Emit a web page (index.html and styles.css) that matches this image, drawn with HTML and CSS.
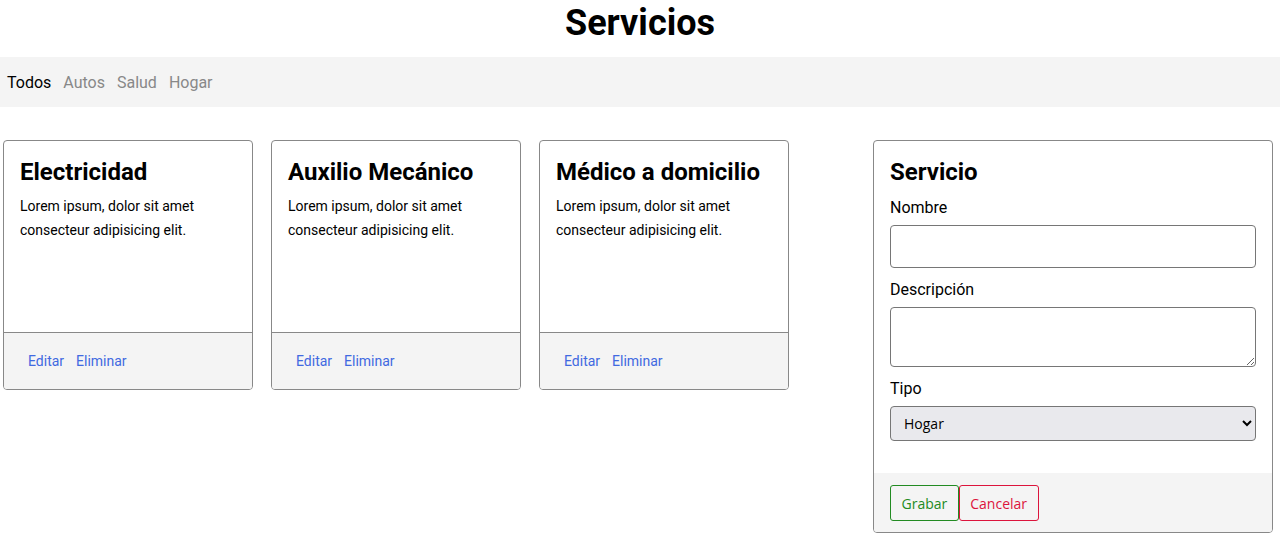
FILE: index.html
```html
<!DOCTYPE html>
<html lang="es">
<head>
  <meta charset="utf-8">
  <title>Servicios</title>
  <link rel="stylesheet" href="styles.css">
</head>
<body>

  <h1 class="page-title">Servicios</h1>

  <nav class="filter-bar">
    <a href="#" class="filter active">Todos</a>
    <a href="#" class="filter">Autos</a>
    <a href="#" class="filter">Salud</a>
    <a href="#" class="filter">Hogar</a>
  </nav>

  <main class="content">
    <div class="card-list">
      <div class="card">
        <div class="card-body">
          <h2>Electricidad</h2>
          <p>Lorem ipsum, dolor sit amet consecteur adipisicing elit.</p>
        </div>
        <div class="card-footer">
          <a href="#">Editar</a>
          <a href="#">Eliminar</a>
        </div>
      </div>
      <div class="card">
        <div class="card-body">
          <h2>Auxilio Mecánico</h2>
          <p>Lorem ipsum, dolor sit amet consecteur adipisicing elit.</p>
        </div>
        <div class="card-footer">
          <a href="#">Editar</a>
          <a href="#">Eliminar</a>
        </div>
      </div>
      <div class="card">
        <div class="card-body">
          <h2>Médico a domicilio</h2>
          <p>Lorem ipsum, dolor sit amet consecteur adipisicing elit.</p>
        </div>
        <div class="card-footer">
          <a href="#">Editar</a>
          <a href="#">Eliminar</a>
        </div>
      </div>
    </div>

    <form class="card form-card">
      <div class="card-body">
        <h2>Servicio</h2>
        <label for="nombre">Nombre</label>
        <input type="text" id="nombre" class="field">
        <label for="descripcion">Descripción</label>
        <textarea id="descripcion" class="field area"></textarea>
        <label for="tipo">Tipo</label>
        <select id="tipo" class="field select">
          <option>Autos</option>
          <option>Salud</option>
          <option selected>Hogar</option>
        </select>
      </div>
      <div class="form-footer">
        <button type="button" class="btn btn-save">Grabar</button><button type="button" class="btn btn-cancel">Cancelar</button>
      </div>
    </form>
  </main>

</body>
</html>
```

FILE: styles.css
```css
body {
  margin: 0;
  font-family: Roboto, "Liberation Sans", sans-serif;
  color: #000;
  background: #fff;
}
.page-title {
  margin: 0 0 12px;
  padding-top: 1px;
  font-size: 36px;
  line-height: 44px;
  font-weight: 700;
  text-align: center;
}
.filter-bar {
  display: flex;
  align-items: center;
  gap: 12px;
  height: 50px;
  padding: 0 7px;
  background-color: #f4f4f4;
}
.filter {
  font-size: 16px;
  color: #888;
  text-decoration: none;
}
.filter.active {
  color: #000;
}
.content {
  display: flex;
  align-items: flex-start;
  margin-top: 33px;
  padding: 0 7px 0 3px;
}
.card-list {
  display: flex;
  gap: 18px;
}
.card {
  display: flex;
  flex-direction: column;
  width: 250px;
  height: 250px;
  box-sizing: border-box;
  border: 1px solid #888;
  border-radius: 4px;
  overflow: hidden;
}
.card-body {
  flex: 1;
  padding: 16px;
}
.card h2 {
  margin: 0 0 7px;
  padding-top: 1px;
  font-size: 24px;
  line-height: 29px;
  font-weight: 700;
}
.card p {
  margin: 0;
  font-size: 14px;
  line-height: 24px;
}
.card-footer {
  display: flex;
  gap: 12px;
  padding: 16px 24px;
  border-top: 1px solid #888;
  background-color: #f4f4f4;
}
.card-footer a {
  font-size: 14px;
  line-height: 24px;
  color: #4169e1;
  text-decoration: none;
}
.form-card {
  margin: 0 0 0 auto;
  width: 400px;
  height: auto;
}
.form-card .card-body {
  padding-bottom: 16px;
}
.form-card h2 {
  margin-bottom: 8px;
}
.form-card label {
  display: block;
  padding-top: 1px;
  margin-bottom: 5px;
  font-size: 16px;
  line-height: 24px;
}
.field {
  display: block;
  width: 100%;
  box-sizing: border-box;
  margin: 0 0 9px;
  border: 1px solid #767676;
  border-radius: 4px;
  background: #fff;
  font-family: inherit;
}
input.field {
  height: 43px;
}
.area {
  height: 60px;
  resize: vertical;
}
.select {
  height: 35px;
  margin-bottom: 16px;
  padding: 0 9px;
  background-color: #e9e9ed;
  font-family: "Open Sans", "DejaVu Sans", sans-serif;
  font-size: 14px;
  color: #000;
}
.form-footer {
  display: flex;
  padding: 12px 16px 11px;
  background-color: #f4f4f4;
}
.btn {
  height: 36px;
  padding: 0 10.5px;
  margin: 0;
  background: transparent;
  border-radius: 3px;
  font-family: "Open Sans", "DejaVu Sans", sans-serif;
  font-size: 14px;
  cursor: pointer;
}
.btn-save {
  border: 1px solid #228b22;
  color: #228b22;
}
.btn-cancel {
  border: 1px solid #dc143c;
  color: #dc143c;
}
```
